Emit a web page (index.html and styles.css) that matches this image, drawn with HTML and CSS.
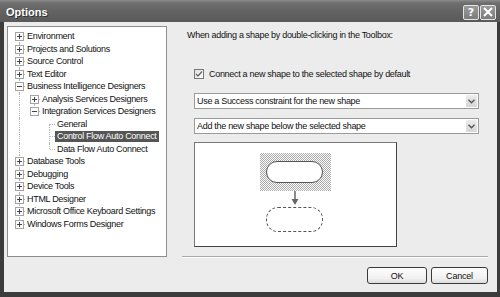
FILE: index.html
```html
<!DOCTYPE html>
<html lang="en">
<head>
    <meta charset="UTF-8">
    <title>Options</title>
    <link rel="stylesheet" href="styles.css">
</head>
<body>
    <div class="window">
        <div class="titlebar">
            <span class="title">Options</span>
            <div class="caption-buttons">
                <span class="cap-btn help">?</span>
                <span class="cap-btn close">
                    <svg width="10" height="10" viewBox="0 0 10 10"><path d="M1 1 L9 9 M9 1 L1 9" stroke="#fff" stroke-width="2"/></svg>
                </span>
            </div>
        </div>

        <div class="client">
            <div class="main">
                <div class="tree">
                    <div class="node"><span class="slot first"><i class="box"></i></span>Environment</div>
                    <div class="node"><span class="slot"><i class="box"></i></span>Projects and Solutions</div>
                    <div class="node"><span class="slot"><i class="box"></i></span>Source Control</div>
                    <div class="node"><span class="slot"><i class="box"></i></span>Text Editor</div>
                    <div class="node"><span class="slot"><i class="box open"></i></span>Business Intelligence Designers</div>
                    <div class="node"><span class="indent pipe"></span><span class="slot first"><i class="box"></i></span>Analysis Services Designers</div>
                    <div class="node"><span class="indent pipe"></span><span class="slot last"><i class="box open"></i></span>Integration Services Designers</div>
                    <div class="node"><span class="indent pipe"></span><span class="indent"></span><span class="slot first"></span>General</div>
                    <div class="node"><span class="indent pipe"></span><span class="indent"></span><span class="slot"></span><span class="selected">Control Flow Auto Connect</span></div>
                    <div class="node"><span class="indent pipe"></span><span class="indent"></span><span class="slot last"></span>Data Flow Auto Connect</div>
                    <div class="node"><span class="slot"><i class="box"></i></span>Database Tools</div>
                    <div class="node"><span class="slot"><i class="box"></i></span>Debugging</div>
                    <div class="node"><span class="slot"><i class="box"></i></span>Device Tools</div>
                    <div class="node"><span class="slot"><i class="box"></i></span>HTML Designer</div>
                    <div class="node"><span class="slot"><i class="box"></i></span>Microsoft Office Keyboard Settings</div>
                    <div class="node"><span class="slot last"><i class="box"></i></span>Windows Forms Designer</div>
                </div>

                <div class="page">
                    <p class="intro">When adding a shape by double-clicking in the Toolbox:</p>

                    <label class="check-row">
                        <span class="checkbox">
                            <svg width="8" height="8" viewBox="0 0 8 8"><path d="M1 4 L3 6 L7 1.5" fill="none" stroke="#666" stroke-width="1.3"/></svg>
                        </span>
                        Connect a new shape to the selected shape by default
                    </label>

                    <div class="combo first-combo">
                        <span class="combo-text">Use a Success constraint for the new shape</span>
                        <span class="combo-btn">
                            <svg width="7" height="5" viewBox="0 0 7 5"><path d="M0.5 0.8 L3.5 3.8 L6.5 0.8" fill="none" stroke="#555" stroke-width="1.4"/></svg>
                        </span>
                    </div>
                    <div class="combo second-combo">
                        <span class="combo-text">Add the new shape below the selected shape</span>
                        <span class="combo-btn">
                            <svg width="7" height="5" viewBox="0 0 7 5"><path d="M0.5 0.8 L3.5 3.8 L6.5 0.8" fill="none" stroke="#555" stroke-width="1.4"/></svg>
                        </span>
                    </div>

                    <div class="preview">
                        <div class="hatch">
                            <div class="shape"></div>
                        </div>
                        <svg class="arrow" width="10" height="16" viewBox="0 0 10 16">
                            <path d="M5 0 L5 9" stroke="#666" stroke-width="1.5"/>
                            <path d="M1.5 8 L8.5 8 L5 14 Z" fill="#666"/>
                        </svg>
                        <div class="shape dashed"></div>
                    </div>
                </div>
            </div>

            <div class="footer">
                <button class="btn ok">OK</button>
                <button class="btn">Cancel</button>
            </div>
        </div>
    </div>
</body>
</html>
```

FILE: styles.css
```css
* {
    box-sizing: border-box;
}
body {
    margin: 0;
    background-color: #3a3a3a;
    font-family: "Liberation Sans", Arial, sans-serif;
    font-size: 9px;
    letter-spacing: -0.3px;
    color: #111;
}
.window {
    width: 500px;
    height: 297px;
    display: flex;
    flex-direction: column;
    background-color: #3c3c3c;
}
.titlebar {
    height: 22px;
    display: flex;
    align-items: center;
    justify-content: space-between;
    padding: 0 4px 0 6px;
    background: linear-gradient(#8c8c8c 0px, #6e6e6e 3px, #626262 12px, #5a5a5a 22px);
}
.title {
    color: #fff;
    font-family: "Liberation Sans", Arial, sans-serif;
    font-weight: bold;
    font-size: 11px;
    letter-spacing: 0;
    text-shadow: 1px 1px 0 #333;
    margin-top: 1px;
}
.caption-buttons {
    display: flex;
    gap: 1px;
    margin-top: 2px;
}
.cap-btn {
    width: 16px;
    height: 15px;
    display: flex;
    align-items: center;
    justify-content: center;
    border: 1px solid #e4e4e4;
    border-radius: 2px;
    background: linear-gradient(#9a9a9a, #7c7c7c);
    color: #fff;
    font-family: "DejaVu Sans", sans-serif;
    font-weight: bold;
    font-size: 11px;
    letter-spacing: 0;
}
.client {
    flex: 1;
    margin: 0 3px 5px 4px;
    background-color: #ececec;
    display: flex;
    flex-direction: column;
}
.main {
    display: flex;
    padding: 4px 0 0 3px;
}
.tree {
    width: 160px;
    height: 231px;
    background-color: #fff;
    border: 1px solid #8e8e8e;
    padding: 3px 0 0 7px;
}
.node {
    display: flex;
    align-items: center;
    height: 12.5px;
    white-space: nowrap;
}
.indent {
    width: 15px;
    height: 100%;
    flex: none;
    position: relative;
}
.slot {
    width: 12px;
    height: 100%;
    flex: none;
    position: relative;
}
.indent.pipe::before,
.slot::before {
    content: "";
    position: absolute;
    left: 4px;
    top: 0;
    bottom: 0;
    border-left: 1px dotted #b4b4b4;
}
.slot::after {
    content: "";
    position: absolute;
    left: 5px;
    top: 6px;
    width: 5px;
    border-top: 1px dotted #b4b4b4;
}
.slot.first::before {
    top: 6px;
}
.slot.last::before {
    bottom: 6px;
}
.box {
    position: absolute;
    left: 0;
    top: 2px;
    width: 9px;
    height: 9px;
    z-index: 1;
    border: 1px solid #a4a4a4;
    background:
        linear-gradient(#444, #444) center / 5px 1px no-repeat,
        linear-gradient(#444, #444) center / 1px 5px no-repeat,
        #fcfcfc;
}
.box.open {
    background:
        linear-gradient(#444, #444) center / 5px 1px no-repeat,
        #fcfcfc;
}
.selected {
    background-color: #555;
    color: #fff;
    padding: 0 2px;
    margin-left: -2px;
    line-height: 11px;
}
.page {
    width: 306px;
    height: 231px;
    margin-left: 15px;
    padding-left: 5px;
    border-bottom: 1px solid #a9a9a9;
    box-shadow: 0 1px 0 #fff;
}
.intro {
    margin: 3px 0 0 0;
    line-height: 12px;
}
.check-row {
    display: flex;
    align-items: center;
    gap: 5px;
    margin: 28px 0 0 7px;
    height: 10px;
}
.checkbox {
    width: 10px;
    height: 10px;
    border: 1px solid #777;
    background: linear-gradient(135deg, #e0e0e0, #fff);
    display: flex;
    align-items: center;
    justify-content: center;
}
.combo {
    width: 285px;
    height: 16px;
    margin-left: 7px;
    display: flex;
    align-items: center;
    justify-content: space-between;
    background-color: #fff;
    border: 1px solid #9a9a9a;
    padding: 0 1px 0 2px;
}
.first-combo {
    margin-top: 14px;
}
.second-combo {
    margin-top: 9px;
}
.combo-btn {
    width: 11px;
    height: 12px;
    display: flex;
    align-items: center;
    justify-content: center;
    background: linear-gradient(#ececec, #d6d6d6);
    border-radius: 1px;
}
.preview {
    width: 203px;
    height: 105px;
    margin: 8px 0 0 7px;
    background-color: #fff;
    border: 1px solid #444;
    border-top-color: #777;
    border-left-color: #777;
    display: flex;
    flex-direction: column;
    align-items: center;
    padding-top: 10px;
}
.hatch {
    width: 71px;
    height: 38px;
    padding: 8px 0 0 6px;
    background: repeating-conic-gradient(#a8a8a8 0 25%, #fff 0 50%) 0 0 / 2px 2px;
    align-self: center;
}
.shape {
    width: 57px;
    height: 22px;
    border: 1.5px solid #555;
    border-radius: 11px;
    background-color: #fff;
}
.arrow {
    display: block;
    margin-left: -2px;
}
.shape.dashed {
    height: 25px;
    border: 1.5px dashed #555;
    border-radius: 12px;
    margin-left: -3px;
}
.footer {
    display: flex;
    justify-content: flex-end;
    gap: 4px;
    padding: 10px 9px 0 0;
}
.btn {
    width: 57px;
    height: 17px;
    padding: 0;
    font-family: "Liberation Sans", Arial, sans-serif;
    font-size: 9px;
    letter-spacing: -0.2px;
    color: #111;
    border: 1px solid #3a3a3a;
    border-radius: 3px;
    background: linear-gradient(#fdfdfd, #f0f0f0 70%, #dcdcdc);
}
.btn.ok {
    width: 60px;
}
```
